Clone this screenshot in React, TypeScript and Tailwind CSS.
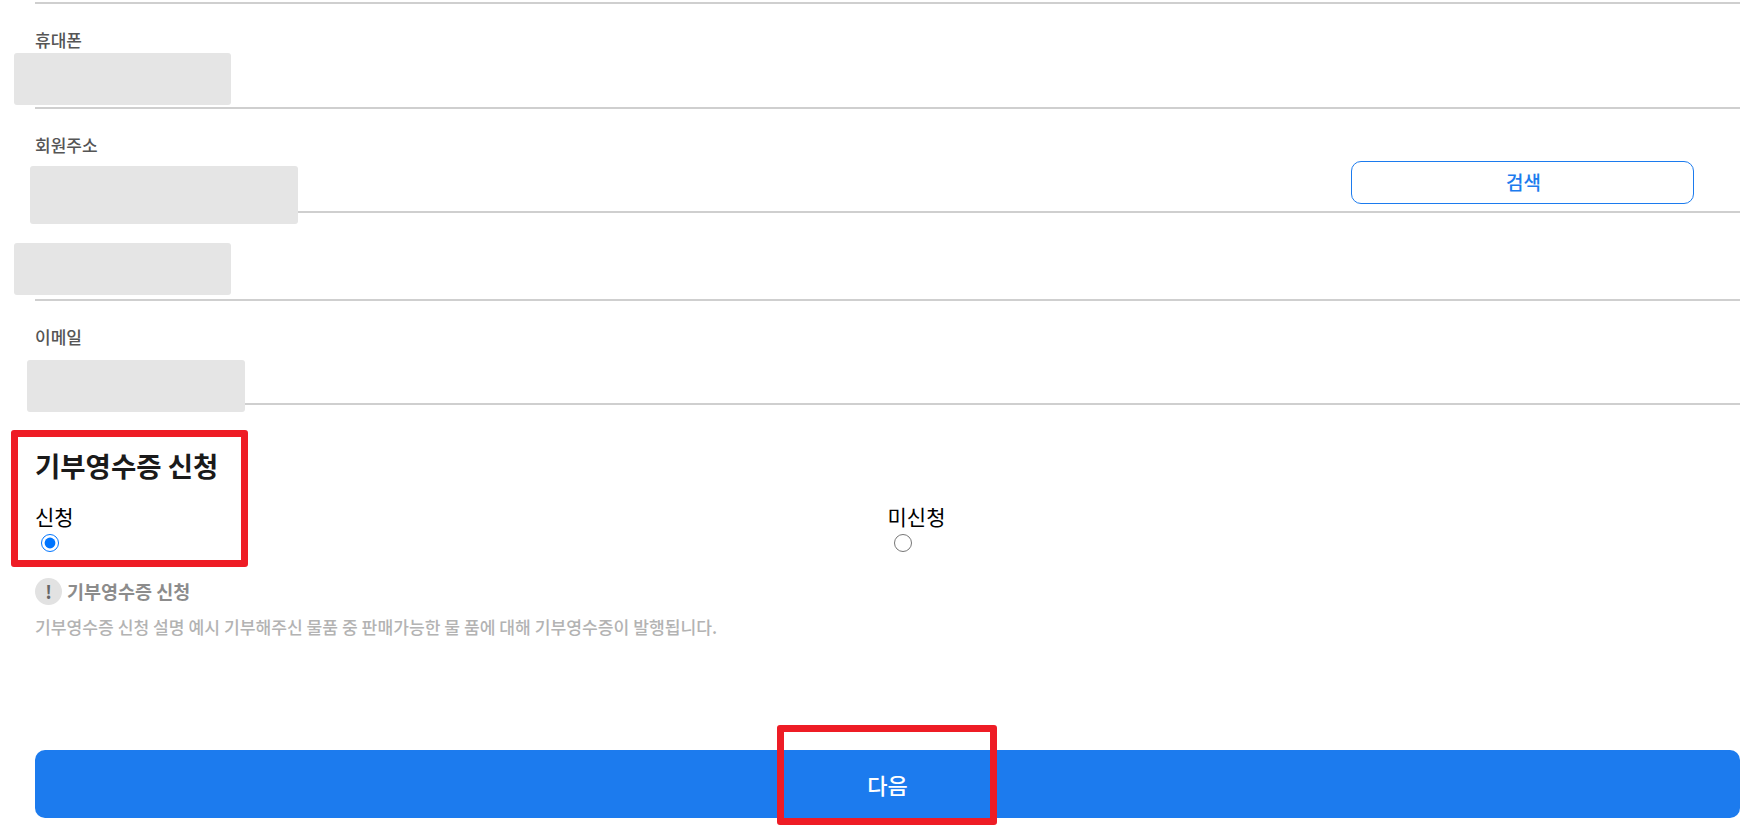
import React from 'react';

const fontStack = "font-['Noto_Sans_CJK_KR','Noto_Sans',sans-serif]";

// grey blocks covering the input values in the original capture
const Redaction = ({ className }: { className: string }) => (
  <div className={`absolute rounded-[3px] bg-[#e5e5e5] ${className}`} />
);

const Field = ({ label, className, children }: { label?: string; className: string; children?: React.ReactNode }) => (
  <div className={`relative border-b-[2px] border-[#cfcfcf] ${className}`}>
    {label && <div className="pt-[25px] text-[17px] leading-[22px] font-medium text-[#555555]">{label}</div>}
    {children}
  </div>
);

export default function App() {
  return (
    <div className={`relative h-[830px] w-full overflow-hidden bg-white pl-[35px] pr-[12px] pt-[2px] ${fontStack}`}>
      <div className="border-t-[2px] border-[#cfcfcf]" />

      <Field label="휴대폰" className="h-[105px]">
        <Redaction className="left-[-21.5px] top-[49px] h-[52px] w-[217px]" />
      </Field>

      <Field label="회원주소" className="h-[104px]">
        <Redaction className="left-[-5px] top-[57px] h-[58px] w-[268px]" />
        <button className="absolute right-[46px] top-[52px] h-[43px] w-[343px] rounded-[10px] border border-[#1c7bee] pl-[2px] text-[19px] font-medium text-[#1c7bee]">
          검색
        </button>
      </Field>

      <Field className="h-[88px]">
        <Redaction className="left-[-21.5px] top-[30px] h-[52px] w-[217px]" />
      </Field>

      <Field label="이메일" className="h-[104px]">
        <Redaction className="left-[-8px] top-[59px] h-[52px] w-[218px]" />
      </Field>

      <h2 className="mt-[42px] text-[27.5px] leading-[36px] font-bold text-[#1a1a1a]">기부영수증 신청</h2>

      <div className="mt-[18px] grid grid-cols-2">
        <label className="flex flex-col items-start text-[21px] leading-[30px] text-black">
          신청
          <input type="radio" name="receipt" defaultChecked className="ml-[6px] mt-[3px] h-[18px] w-[18px] accent-[#0075ff]" />
        </label>
        <label className="flex flex-col items-start text-[21px] leading-[30px] text-black">
          미신청
          <input type="radio" name="receipt" className="ml-[6px] mt-[3px] h-[18px] w-[18px]" />
        </label>
      </div>

      <div className="mt-[26px] flex items-center gap-[5px]">
        <span className="flex h-[27px] w-[27px] items-center justify-center rounded-full bg-[#e2e2e2] text-[18px] font-bold text-[#666666]">
          !
        </span>
        <span className="text-[18.5px] leading-[27px] font-bold text-[#8c8c8c]">기부영수증 신청</span>
      </div>
      <p className="mt-[10px] text-[17.15px] leading-[24px] font-medium text-[#b3b3b3]">
        기부영수증 신청 설명 예시 기부해주신 물품 중 판매가능한 물 품에 대해 기부영수증이 발행됩니다.
      </p>

      <button className="mt-[111px] h-[68px] w-full rounded-[10px] bg-[#1c7bee] text-[22px] font-medium text-white">
        다음
      </button>

      {/* red annotation frames */}
      <div className="absolute left-[11px] top-[430px] h-[137px] w-[237px] rounded-[3px] border-[7px] border-[#ee1c25]" />
      <div className="absolute left-[777px] top-[725px] h-[100px] w-[220px] rounded-[3px] border-[7px] border-[#ee1c25]" />
    </div>
  );
}
